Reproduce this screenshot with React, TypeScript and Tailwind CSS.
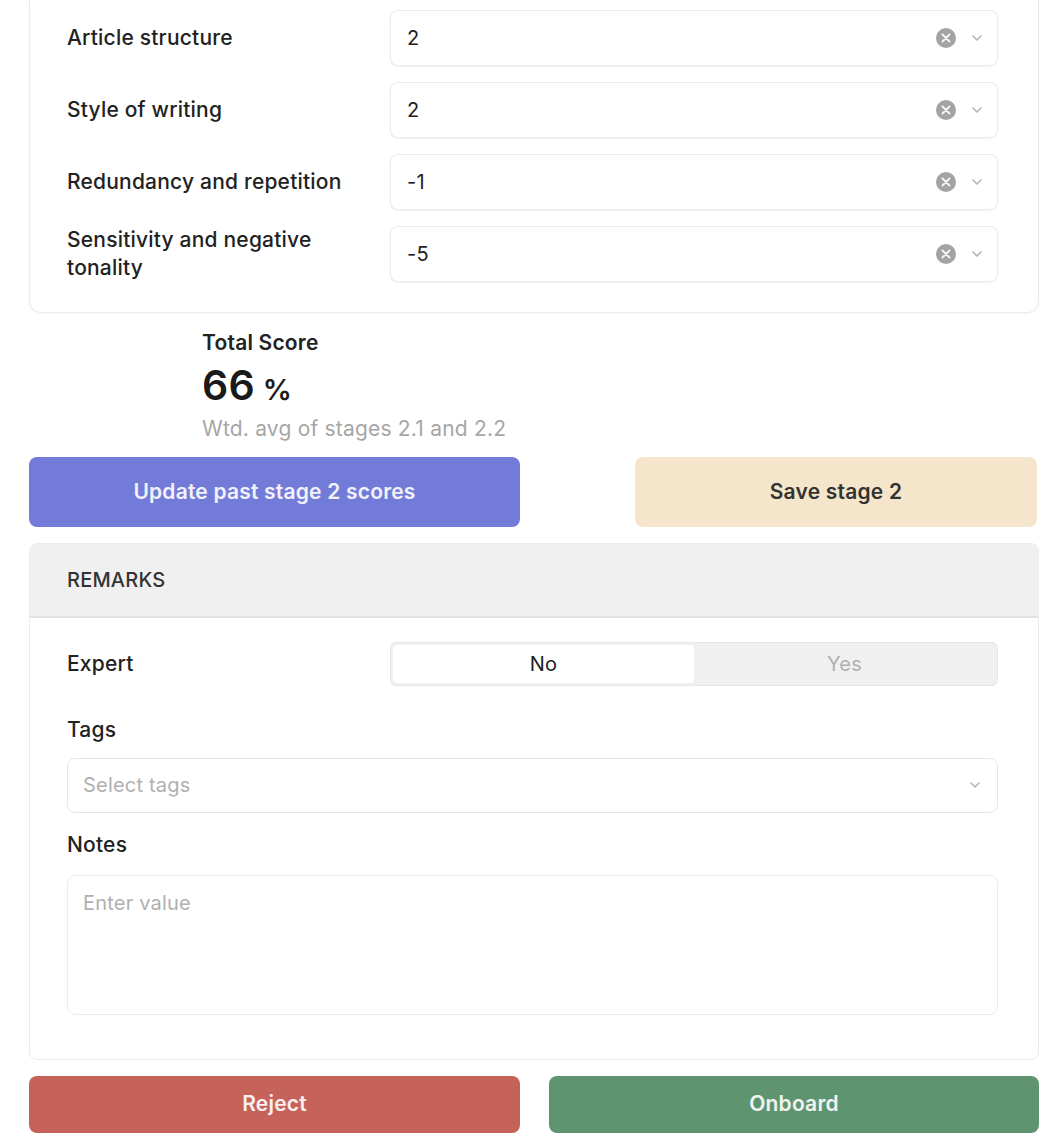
import { ChevronDown } from "lucide-react";

const scores = [
  { label: "Article structure", value: "2" },
  { label: "Style of writing", value: "2" },
  { label: "Redundancy and repetition", value: "-1" },
  { label: "Sensitivity and negative tonality", value: "-5" },
];

function ClearIcon() {
  return (
    <svg width="22" height="22" viewBox="0 0 22 22" className="shrink-0">
      <circle cx="11" cy="11" r="10" fill="#a3a3a3" />
      <path d="M7.5 7.5l7 7M14.5 7.5l-7 7" stroke="#f4f4f4" strokeWidth="2" strokeLinecap="round" />
    </svg>
  );
}

function ScoreSelect({ value }: { value: string }) {
  return (
    <div className="flex h-[56px] items-center rounded-lg border border-[#ececec] bg-white pl-4 pr-3 shadow-[0_1px_2px_rgba(0,0,0,0.05)]">
      <span className="flex-1 text-[20px] text-[#222]">{value}</span>
      <ClearIcon />
      <ChevronDown className="ml-3 h-4 w-4 text-[#b5b5b5]" strokeWidth={2.5} />
    </div>
  );
}

export default function App() {
  return (
    <div
      className="min-h-[1148px] bg-white pb-4 text-[#222] tracking-[0.2px]"
      style={{ fontFamily: "Inter, 'Liberation Sans', sans-serif" }}
    >
      <div className="ml-[29px] w-[1010px]">
        {/* stage 2.2 scores */}
        <div className="rounded-b-xl border border-t-0 border-[#ececec] pb-[30px] pl-[37px] pr-[40px] pt-[10px] shadow-[0_1px_3px_rgba(0,0,0,0.04)]">
          <div className="flex flex-col gap-4">
            {scores.map((s) => (
              <div key={s.label} className="grid grid-cols-[323px_1fr] items-center">
                <span className="pr-8 text-[21px] font-medium leading-[28px]">{s.label}</span>
                <ScoreSelect value={s.value} />
              </div>
            ))}
          </div>
        </div>

        {/* total */}
        <div className="ml-[173px] mt-[16px] flex flex-col">
          <span className="text-[21px] font-semibold leading-[28px]">Total Score</span>
          <div className="mt-[6px] flex items-baseline gap-2">
            <span className="text-[41px] font-semibold leading-[44px] text-[#1a1a1a]">66</span>
            <span className="text-[29px] font-semibold text-[#1a1a1a]">%</span>
          </div>
          <span className="mt-[3px] text-[21px] leading-[28px] text-[#a6a6a6]">
            Wtd. avg of stages 2.1 and 2.2
          </span>
        </div>

        <div className="mt-[14px] flex justify-between">
          <button className="h-[70px] w-[491px] rounded-lg bg-[#737bd8] text-[21px] font-semibold text-white/90">
            Update past stage 2 scores
          </button>
          <button className="mr-[2px] h-[70px] w-[402px] rounded-lg bg-[#f5e6cb] text-[21px] font-semibold text-[#333]">
            Save stage 2
          </button>
        </div>

        {/* remarks */}
        <div className="mt-[16px] overflow-hidden rounded-lg border border-[#ececec]">
          <div className="flex h-[74px] items-center border-b-2 border-[#e2e2e2] bg-[#f0f0f0] pl-[37px] text-[20px] font-medium text-[#333]">
            REMARKS
          </div>
          <div className="pb-[44px] pl-[37px] pr-[40px] pt-[24px]">
            <div className="grid grid-cols-[323px_1fr] items-center">
              <span className="text-[21px] font-medium">Expert</span>
              <div className="flex h-[44px] rounded-md border border-[#e6e6e6] bg-[#f0f0f0] p-[2px]">
                <div className="flex flex-1 items-center justify-center rounded bg-white text-[20px] text-[#222]">
                  No
                </div>
                <div className="flex flex-1 items-center justify-center text-[20px] text-[#b0b0b0]">
                  Yes
                </div>
              </div>
            </div>

            <div className="mt-[30px] text-[21px] font-medium leading-[28px]">Tags</div>
            <div className="mt-[14px] flex h-[55px] items-center rounded-lg border border-[#e6e6e6] pl-[15px] pr-[14px]">
              <span className="flex-1 text-[20px] text-[#b0b0b0]">Select tags</span>
              <ChevronDown className="h-4 w-4 text-[#b5b5b5]" strokeWidth={2.5} />
            </div>

            <div className="mt-[18px] text-[21px] font-medium leading-[28px]">Notes</div>
            <div className="mt-[16px] h-[140px] rounded-lg border border-[#ececec] px-[15px] pt-[12px] text-[20px] text-[#b0b0b0]">
              Enter value
            </div>
          </div>
        </div>

        <div className="mt-[16px] flex justify-between">
          <button className="h-[57px] w-[491px] rounded-lg bg-[#c5625a] text-[21px] font-semibold text-white/90">
            Reject
          </button>
          <button className="h-[57px] w-[490px] rounded-lg bg-[#5f9470] text-[21px] font-semibold text-white/90">
            Onboard
          </button>
        </div>
      </div>
    </div>
  );
}
